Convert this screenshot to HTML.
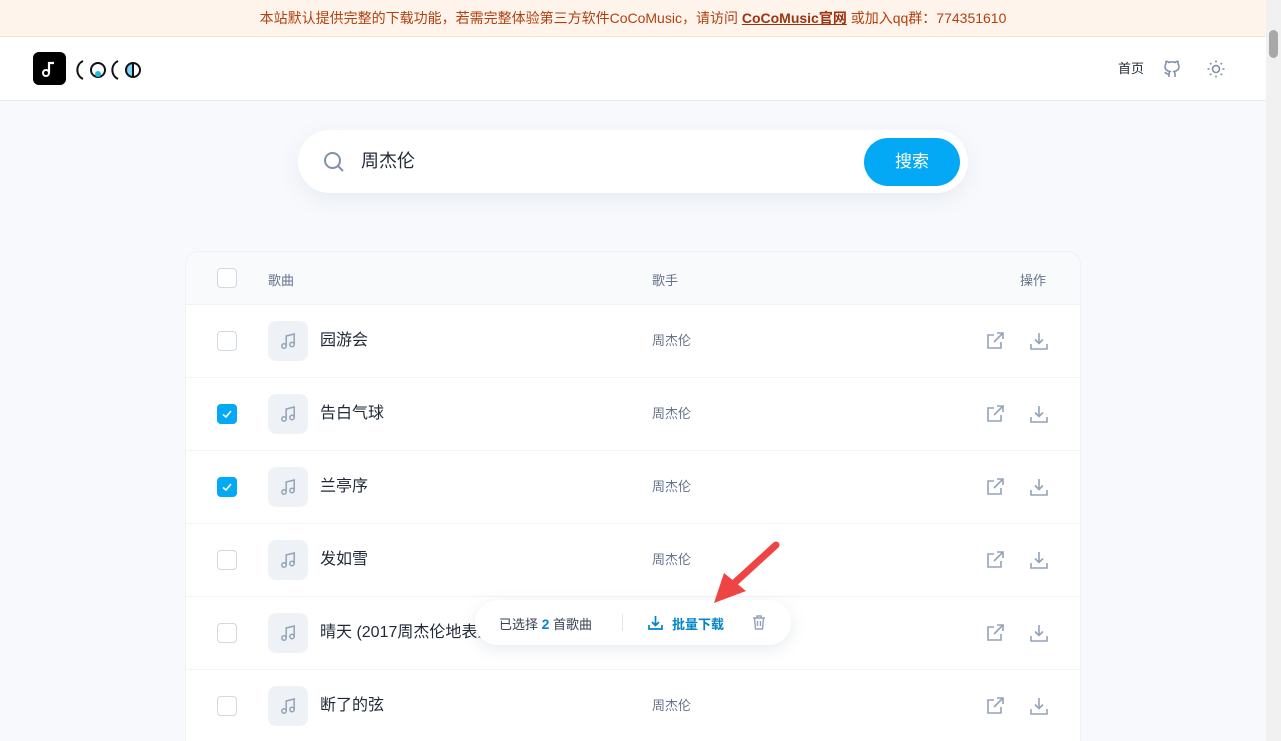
<!DOCTYPE html>
<html style="height:741px;overflow:hidden"><head><meta charset="utf-8"><style>
*{box-sizing:border-box;margin:0;padding:0}
body{width:1281px;height:741px;overflow:hidden;background:#f7f9fc;font-family:"Liberation Sans","Noto Sans CJK SC",sans-serif;position:relative}
.banner{position:absolute;left:0;top:0;width:1266px;height:37px;background:#fff4ec;border-bottom:1px solid #fde4c8;color:#b1400f;font-size:14px;text-align:center;line-height:36px}
.banner b{text-decoration:underline;color:#9a3412}
.nav{position:absolute;left:0;top:37px;width:1266px;height:64px;background:#fff;border-bottom:1px solid #dbeefb}
.sb{position:absolute;right:0;top:0;width:15px;height:741px;background:#f1f1f1}
.sb .th{position:absolute;left:3px;top:30px;width:9px;height:28px;border-radius:5px;background:#a8a8a8}
.search{position:absolute;left:298px;top:130px;width:670px;height:63px;background:#fff;border-radius:32px;box-shadow:0 6px 20px rgba(120,140,170,.12)}
.search .q{position:absolute;left:63px;top:0;line-height:63px;font-size:18px;color:#1f2937}
.btn{position:absolute;left:566px;top:8px;width:96px;height:48px;border-radius:24px;background:#03a9f4;color:#fff;font-size:17px;text-align:center;line-height:48px}
.card{position:absolute;left:185px;top:251px;width:896px;height:520px;background:#fff;border-radius:14px;border:1px solid #eef1f5;overflow:hidden}
.hdr{height:52px;background:#f9fafc;position:relative;font-size:13px;color:#64748b}
.row{height:73px;border-top:1px solid #f1f3f6;position:relative}
.cb{position:absolute;left:31px;width:20px;height:20px;border:1px solid #cfd8e3;border-radius:4px;background:#fff}
.cb.on{background:#03a9f4;border-color:#03a9f4}
.ic{position:absolute;left:82px;top:16px;width:40px;height:40px;border-radius:8px;background:#eef2f7}
.t{position:absolute;left:134px;top:0;line-height:72px;font-size:16px;color:#1f2937}
.a{position:absolute;left:466px;top:0;line-height:72px;font-size:13px;color:#64748b}
.op{position:absolute;top:26px}
.bar{position:absolute;left:475px;top:600px;width:316px;height:45px;background:#fff;border-radius:23px;box-shadow:0 4px 16px rgba(100,120,150,.15);font-size:13px;color:#374151}
</style></head><body>
<div class="banner">本站默认提供完整的下载功能，若需完整体验第三方软件CoCoMusic，请访问 <b>CoCoMusic官网</b> 或加入qq群：774351610</div>
<div class="nav">
<div style="position:absolute;left:33px;top:15px;width:33px;height:33px;background:#000;border-radius:6px"><svg width="33" height="33"><circle cx="13" cy="21" r="3" fill="none" stroke="#fff" stroke-width="2"/><path d="M16 21V11h5" stroke="#fff" stroke-width="2.2" fill="none"/></svg></div>
<svg style="position:absolute;left:76px;top:20px" width="70" height="26"><path d="M7 4a10 10 0 0 0 0 18" stroke="#111" stroke-width="2" fill="none"/><circle cx="22" cy="13" r="7" stroke="#111" stroke-width="2" fill="none"/><circle cx="22" cy="17" r="3" fill="#22bde6"/><path d="M42 4a10 10 0 0 0 0 18" stroke="#111" stroke-width="2" fill="none"/><path d="M57 6a7 7 0 0 0 0 14z" fill="#7dd3fc"/><circle cx="57" cy="13" r="7" stroke="#111" stroke-width="2" fill="none"/><path d="M57 6v14" stroke="#111" stroke-width="2"/></svg>
<div style="position:absolute;left:1118px;top:0;line-height:64px;font-size:13px;color:#1f2937">首页</div>
<svg style="position:absolute;left:1162px;top:22px" width="20" height="20" fill="none" stroke="#7b8aa3" stroke-width="1.5"><path d="M7 18v-3c0-1 .5-2 1-2.5C5 12 3 10.5 3 7.5c0-1 .4-2 1-2.7-.2-.7-.1-1.7.2-2.5 1 0 2 .5 2.8 1.2a8 8 0 0 1 6 0C13.8 2.8 14.8 2.3 15.8 2.3c.3.8.4 1.8.2 2.5.6.7 1 1.7 1 2.7 0 3-2 4.5-5 5 .5.5 1 1.5 1 2.5v3"/><path d="M7 15c-2 .5-3-.5-4-2"/></svg>
<svg style="position:absolute;left:1206px;top:22px" width="20" height="20" fill="none" stroke="#7b8aa3" stroke-width="1.5"><circle cx="10" cy="10" r="3.5"/><path d="M10 1.5v2M10 16.5v2M1.5 10h2M16.5 10h2M4 4l1.4 1.4M14.6 14.6L16 16M4 16l1.4-1.4M14.6 5.4L16 4"/></svg>
</div>
<div class="search">
<svg style="position:absolute;left:24px;top:20px" width="24" height="24" fill="none" stroke="#8391a7" stroke-width="2"><circle cx="10.5" cy="10.5" r="7.5"/><path d="M16 16l5 5"/></svg>
<div class="q">周杰伦</div><div class="btn">搜索</div></div>
<div class="card">
<div class="hdr"><div class="cb" style="top:16px"></div><span style="position:absolute;left:82px;top:18px">歌曲</span><span style="position:absolute;left:466px;top:18px">歌手</span><span style="position:absolute;left:834px;top:18px">操作</span></div>
<div id="rows"></div>
</div>
<div class="bar">
<span style="position:absolute;left:24px;top:14px">已选择 <b style="color:#0284c7;font-size:14px">2</b> 首歌曲</span>
<div style="position:absolute;left:147px;top:14px;width:1px;height:17px;background:#e2e8f0"></div>
<svg style="position:absolute;left:172px;top:14px" width="17" height="17" fill="none" stroke="#0284c7" stroke-width="1.7"><path d="M8.5 2v9M5 8l3.5 3.5L12 8M2 11v4h13v-4"/></svg>
<span style="position:absolute;left:197px;top:14px;color:#0284c7;font-weight:bold">批量下载</span>
<svg style="position:absolute;left:276px;top:14px" width="16" height="17" fill="none" stroke="#94a3b8" stroke-width="1.4"><path d="M2 4h12M6 4V2h4v2M3.5 4l1 11h7l1-11M6.5 7v5M9.5 7v5"/></svg>
</div>
<svg style="position:absolute;left:700px;top:535px" width="90" height="80"><path d="M76 10L30 52" stroke="#ef4444" stroke-width="7" stroke-linecap="round"/><path d="M14 68l10-30 22 18z" fill="#ef4444"/></svg>
<div class="sb"><div class="th"></div></div>
<script>
var s=[["园游会",0],["告白气球",1],["兰亭序",1],["发如雪",0],["晴天 (2017周杰伦地表最强世界巡回演唱会)",0],["断了的弦",0]],h="";
var note='<svg style="position:absolute;left:10px;top:10px" width="20" height="20" fill="none" stroke="#94a3b8" stroke-width="1.5"><circle cx="6" cy="15" r="2.2"/><circle cx="14" cy="13.5" r="2.2"/><path d="M8.2 15V5l8-2v10.5"/></svg>';
s.forEach(function(r){h+='<div class="row"><div class="cb'+(r[1]?' on':'')+'" style="top:26px">'+(r[1]?'<svg width="18" height="18" fill="none" stroke="#fff" stroke-width="1.6"><path d="M5 9.5l3 2.5 5-6"/></svg>':'')+'</div><div class="ic">'+note+'</div><div class="t">'+r[0]+'</div><div class="a">周杰伦</div><svg class="op" style="left:799px" width="20" height="20" fill="none" stroke="#94a3b8" stroke-width="1.6"><path d="M9 4H3v13h13v-6M12 2h6v6M18 2l-9 9"/></svg><svg class="op" style="left:843px" width="20" height="20" fill="none" stroke="#94a3b8" stroke-width="1.6"><path d="M10 2v10M6 8.5l4 4 4-4M2 13v5h16v-5"/></svg></div>'});
document.getElementById("rows").innerHTML=h;
</script>
</body></html>
